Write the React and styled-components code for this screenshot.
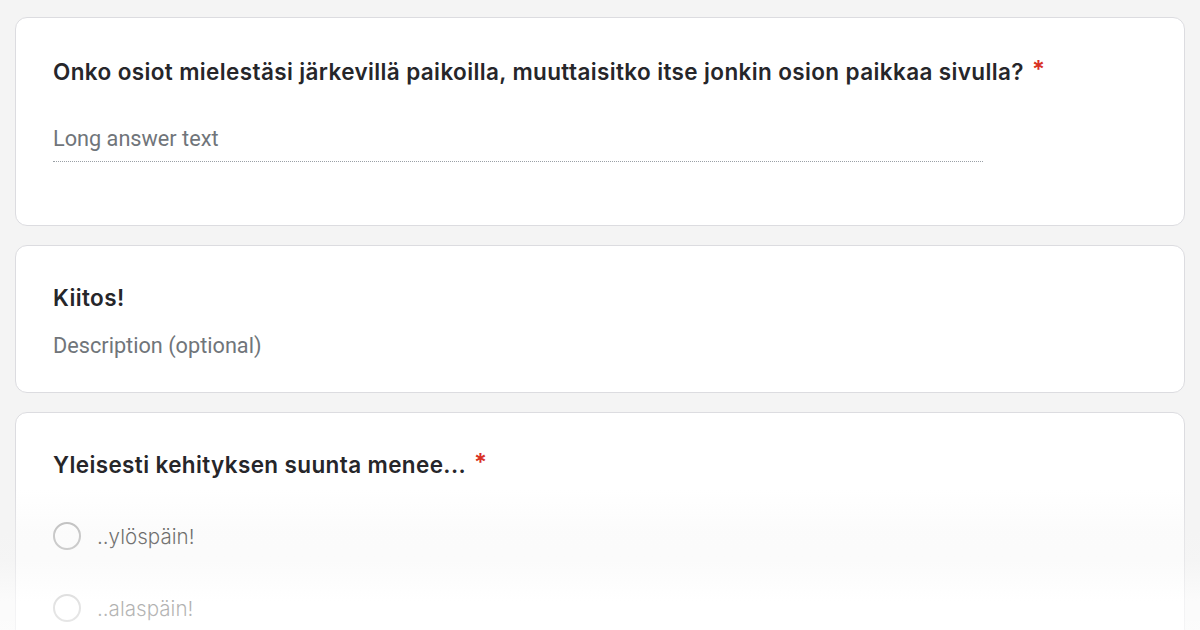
import React from "react";
import styled, { createGlobalStyle } from "styled-components";

const Global = createGlobalStyle`
  html, body { margin: 0; padding: 0; background: #f4f4f4; }
  body { width: 1200px; height: 630px; overflow: hidden; }
`;

const Page = styled.div`
  position: relative;
  width: 1200px;
  height: 630px;
  overflow: hidden;
  padding: 17px 15px 0;
  box-sizing: border-box;
  display: flex;
  flex-direction: column;
  gap: 19px;
`;

const Card = styled.div`
  background: #fff;
  border: 1px solid #dcdce0;
  border-radius: 12px;
  padding: ${(p) => p.$pad || "0"};
  box-sizing: border-box;
  height: ${(p) => (p.$h ? p.$h + "px" : "auto")};
  flex-shrink: 0;
`;

const Title = styled.div`
  font-family: Inter, "Open Sans", sans-serif;
  font-weight: 600;
  font-size: 22.5px;
  letter-spacing: 0.38px;
  color: #26262a;
  line-height: 28px;
  display: flex;
  align-items: flex-start;
  gap: 8px;
`;

const Star = styled.span`
  color: #d93025;
  font-size: 24px;
  line-height: 24px;
  letter-spacing: 0;
`;

const Placeholder = styled.div`
  font-family: Roboto, sans-serif;
  font-size: 21.7px;
  color: #70757a;
  line-height: 26px;
`;

const AnswerLine = styled.div`
  width: 930px;
  padding-bottom: 9px;
  border-bottom: 1px dotted #9aa0a6;
  margin-top: 40px;
`;

const Desc = styled(Placeholder)`
  margin-top: 21px;
`;

const Options = styled.div`
  margin-top: 43px;
  display: flex;
  flex-direction: column;
  gap: 44px;
`;

const Option = styled.div`
  display: flex;
  align-items: center;
  gap: 16px;
`;

const Radio = styled.span`
  width: 24px;
  height: 24px;
  border-radius: 50%;
  border: 2px solid #b0b0b0;
  flex-shrink: 0;
`;

const OptLabel = styled.span`
  font-family: Inter, "Open Sans", sans-serif;
  font-weight: 300;
  font-size: 20.6px;
  color: #1f1f22;
`;

const Fade = styled.div`
  position: absolute;
  left: 0;
  right: 0;
  top: 490px;
  bottom: 0;
  pointer-events: none;
  background: linear-gradient(
    to bottom,
    rgba(244, 244, 244, 0) 0%,
    rgba(244, 244, 244, 0.35) 30%,
    rgba(246, 246, 246, 0.45) 50%,
    rgba(255, 255, 255, 0.64) 80%,
    rgba(255, 255, 255, 0.7) 100%
  );
`;

export default function App() {
  return (
    <>
      <Global />
      <Page>
        <Card $pad="40px 37px 0" $h={209}>
          <Title>
            Onko osiot mielestäsi järkevillä paikoilla, muuttaisitko itse jonkin osion paikkaa sivulla?
            <Star>*</Star>
          </Title>
          <AnswerLine>
            <Placeholder>Long answer text</Placeholder>
          </AnswerLine>
        </Card>
        <Card $pad="38px 37px 0" $h={148}>
          <Title>Kiitos!</Title>
          <Desc>Description (optional)</Desc>
        </Card>
        <Card $pad="38px 37px 0" $h={260}>
          <Title>
            Yleisesti kehityksen suunta menee...
            <Star>*</Star>
          </Title>
          <Options>
            <Option>
              <Radio />
              <OptLabel>..ylöspäin!</OptLabel>
            </Option>
            <Option>
              <Radio />
              <OptLabel>..alaspäin!</OptLabel>
            </Option>
          </Options>
        </Card>
        <Fade />
      </Page>
    </>
  );
}
